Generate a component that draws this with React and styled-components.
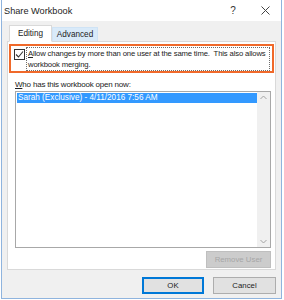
import React from "react";
import styled, { createGlobalStyle } from "styled-components";

const Global = createGlobalStyle`
  html, body { margin: 0; padding: 0; background: #ffffff; }
  body { font-family: "Liberation Sans", Arial, sans-serif; }
  * { box-sizing: border-box; }
`;

const Window = styled.div`
  width: 281px;
  height: 299px;
  margin-left: 1px;
  border: 1px solid #8fb4de;
  border-top: none;
  background: #f0f0f0;
  display: flex;
  flex-direction: column;
`;

const TitleBar = styled.div`
  height: 21px;
  background: #ffffff;
  display: flex;
  align-items: center;
  padding-left: 2px;
  color: #1e1e1e;
  font-size: 9.2px;
`;

const Title = styled.div`
  flex: 1;
`;

const Ctrl = styled.div`
  width: 24px;
  display: flex;
  justify-content: center;
  align-items: center;
  color: #333;
  font-size: 10px;
  margin-right: ${(p) => p.$mr || 0}px;
`;

const Body = styled.div`
  flex: 1;
  display: flex;
  flex-direction: column;
  padding: 3px 5px 0 5px;
`;

const Tabs = styled.div`
  display: flex;
  align-items: flex-end;
  padding-left: 2px;
  height: 17px;
  position: relative;
  z-index: 1;
`;

const Tab = styled.div`
  height: ${(p) => (p.$active ? 17 : 14)}px;
  width: ${(p) => (p.$active ? 43 : 46)}px;
  display: flex;
  align-items: center;
  justify-content: center;
  font-size: 8.2px;
  color: #222;
  background: ${(p) => (p.$active ? "#ffffff" : "#d9eaf9")};
  border: 1px solid ${(p) => (p.$active ? "#d9d9d9" : "#cfe3f5")};
  border-bottom: ${(p) => (p.$active ? "1px solid #ffffff" : "none")};
  margin-bottom: ${(p) => (p.$active ? -1 : 0)}px;
`;

const Panel = styled.div`
  height: 229px;
  background: #ffffff;
  border: 1px solid #d9d9d9;
  padding: 2px 1px 0 1px;
  display: flex;
  flex-direction: column;
`;

const Highlight = styled.div`
  border: 2px solid #f0692a;
  height: 29px;
  display: flex;
  align-items: flex-start;
  padding: 1px 2px 0 3px;
  gap: 1px;
`;

const CheckBox = styled.div`
  width: 11px;
  height: 11px;
  border: 1px solid #333;
  margin-top: 2px;
  display: flex;
  align-items: center;
  justify-content: center;
  flex-shrink: 0;
`;

const FocusText = styled.div`
  flex: 1;
  border: 1px dotted #6d6d6d;
  padding: 1px 1px 0 1px;
  font-size: 7.7px;
  line-height: 10.5px;
  color: #222;
  height: 24px;
  white-space: nowrap;
  letter-spacing: -0.15px;
`;

const Label = styled.div`
  font-size: 8px;
  color: #222;
  margin: 6px 0 0 6px;
  line-height: 11px;
  letter-spacing: -0.2px;
`;

const U = styled.span`
  text-decoration: underline;
`;

const List = styled.div`
  margin: 1px 3px 0 6px;
  height: 157px;
  border: 1px solid #a8a8a8;
  display: flex;
`;

const ListItems = styled.div`
  flex: 1;
  padding: 1px 0 0 1px;
`;

const Row = styled.div`
  height: 10px;
  background: ${(p) => (p.$selected ? "#3399ff" : "transparent")};
  color: ${(p) => (p.$selected ? "#ffffff" : "#222")};
  font-size: 8.2px;
  line-height: 10px;
  padding-left: 1px;
  white-space: nowrap;
`;

const Scroll = styled.div`
  width: 13px;
  background: #f0f0f0;
  display: flex;
  flex-direction: column;
  justify-content: space-between;
  align-items: center;
  padding: 3px 0;
`;

const PanelFooter = styled.div`
  display: flex;
  justify-content: flex-end;
  margin: 3px 3px 0 0;
`;

const Button = styled.div`
  width: ${(p) => p.$w || 63}px;
  height: 17px;
  display: flex;
  align-items: center;
  justify-content: center;
  font-size: 7.8px;
  background: ${(p) => (p.$disabled ? "#cccccc" : "#e1e1e1")};
  color: ${(p) => (p.$disabled ? "#a6a6a6" : "#222")};
  border: 1px solid
    ${(p) => (p.$primary ? "#0078d7" : p.$disabled ? "#bfbfbf" : "#adadad")};
  box-shadow: ${(p) => (p.$primary ? "inset 0 0 0 1px #0078d7" : "none")};
`;

const Footer = styled.div`
  display: flex;
  justify-content: flex-end;
  gap: 9px;
  padding: 7px 0 0 0;
`;

const Chevron = ({ up }) => (
  <svg width="7" height="5" viewBox="0 0 7 5">
    <polyline
      points={up ? "0.5,4 3.5,1 6.5,4" : "0.5,1 3.5,4 6.5,1"}
      fill="none"
      stroke="#a3a3a3"
      strokeWidth="1"
    />
  </svg>
);

export default function App() {
  return (
    <>
      <Global />
      <Window>
        <TitleBar>
          <Title>Share Workbook</Title>
          <Ctrl $mr={8}>?</Ctrl>
          <Ctrl $mr={4}>
            <svg width="9" height="9" viewBox="0 0 9 9">
              <path d="M0.5 0.5 L8.5 8.5 M8.5 0.5 L0.5 8.5" stroke="#444" strokeWidth="1" />
            </svg>
          </Ctrl>
        </TitleBar>
        <Body>
          <Tabs>
            <Tab $active>Editing</Tab>
            <Tab>Advanced</Tab>
          </Tabs>
          <Panel>
            <Highlight>
              <CheckBox>
                <svg width="9" height="9" viewBox="0 0 9 9">
                  <polyline points="1,4.5 3.5,7 8,1.5" fill="none" stroke="#333" strokeWidth="1.1" />
                </svg>
              </CheckBox>
              <FocusText>
                <U>A</U>llow changes by more than one user at the same time.&nbsp; This also allows
                <br />
                workbook merging.
              </FocusText>
            </Highlight>
            <Label>
              <U>W</U>ho has this workbook open now:
            </Label>
            <List>
              <ListItems>
                <Row $selected>Sarah (Exclusive) - 4/11/2016 7:56 AM</Row>
              </ListItems>
              <Scroll>
                <Chevron up />
                <Chevron />
              </Scroll>
            </List>
            <PanelFooter>
              <Button $w={65} $disabled>Remove User</Button>
            </PanelFooter>
          </Panel>
          <Footer>
            <Button $w={62} $primary>OK</Button>
            <Button $w={63}>Cancel</Button>
          </Footer>
        </Body>
      </Window>
    </>
  );
}
